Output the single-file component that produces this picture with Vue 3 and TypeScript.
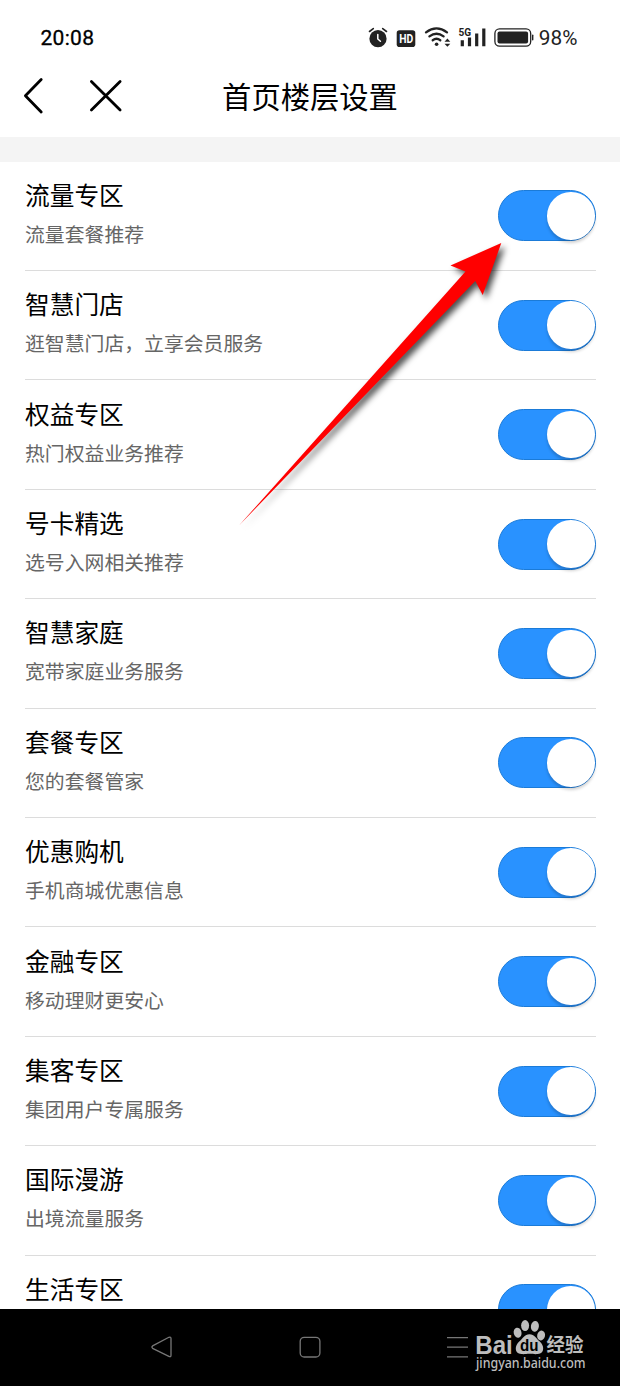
<script setup lang="ts">
import { ref } from 'vue'

interface Floor {
  title: string
  desc: string
  enabled: boolean
}

const floors = ref<Floor[]>([
  { title: '流量专区', desc: '流量套餐推荐', enabled: true },
  { title: '智慧门店', desc: '逛智慧门店，立享会员服务', enabled: true },
  { title: '权益专区', desc: '热门权益业务推荐', enabled: true },
  { title: '号卡精选', desc: '选号入网相关推荐', enabled: true },
  { title: '智慧家庭', desc: '宽带家庭业务服务', enabled: true },
  { title: '套餐专区', desc: '您的套餐管家', enabled: true },
  { title: '优惠购机', desc: '手机商城优惠信息', enabled: true },
  { title: '金融专区', desc: '移动理财更安心', enabled: true },
  { title: '集客专区', desc: '集团用户专属服务', enabled: true },
  { title: '国际漫游', desc: '出境流量服务', enabled: true },
  { title: '生活专区', desc: '', enabled: true },
])
</script>

<template>
  <div class="screen">
    <div class="status">
      <span class="time">20:08</span>
      <svg class="status-icons" width="230" height="40" viewBox="0 0 230 40">
        <!-- alarm -->
        <g fill="none" stroke="#222" stroke-width="1.6" stroke-linecap="round">
          <circle cx="18" cy="18.7" r="8.6" fill="#222" stroke="none" />
          <path d="M9.5 11.5 L13.3 8.6 M22.7 8.6 L26.5 11.5" />
          <path d="M17.8 14.6 V19 L20.4 21.3" stroke="#fff" stroke-width="1.5" />
        </g>
        <!-- HD -->
        <rect x="36.7" y="10.2" width="18.6" height="16.8" rx="2.8" fill="#222" />
        <text x="39.2" y="23.3" class="hd" textLength="14" lengthAdjust="spacingAndGlyphs">HD</text>
        <!-- wifi -->
        <g fill="none" stroke="#222" stroke-width="2.3" stroke-linecap="round">
          <path d="M66 12.3 Q76.5 4.5 87 12.3" />
          <path d="M69.4 16.4 Q76.5 11 83.6 16.4" />
          <path d="M72.7 20.2 Q76.5 17.4 80.3 20.2" />
        </g>
        <circle cx="76.6" cy="24.3" r="1.8" fill="#222" />
        <path d="M84.5 21.7 L87.4 18.5 L90.3 21.7 Z M84.5 23.7 L87.4 26.8 L90.3 23.7 Z" fill="#222" />
        <!-- signal -->
        <text x="98.6" y="15.9" class="g5" textLength="12.6" lengthAdjust="spacingAndGlyphs">5G</text>
        <path d="M100.7 20.2h3.2v6h-3.2z M107.9 17.5h3.2v8.7h-3.2z M115.1 13.4h3.2v12.8h-3.2z M122.2 8.6h3.2v17.6h-3.2z" fill="#222" />
        <!-- battery -->
        <rect x="134.9" y="8.8" width="35.8" height="17.4" rx="4.6" fill="none" stroke="#222" stroke-width="1.3" />
        <rect x="137.5" y="11.4" width="30.6" height="12.2" rx="2" fill="#222" />
        <rect x="172" y="14.5" width="1.4" height="6" rx=".7" fill="#222" />
        <text x="178.8" y="25.1" class="pct" textLength="38.6" lengthAdjust="spacingAndGlyphs">98%</text>
      </svg>
    </div>

    <header class="header">
      <svg class="nav-icons" width="140" height="50" viewBox="0 0 140 50">
        <g fill="none" stroke="#000" stroke-width="2.8" stroke-linecap="round" stroke-linejoin="round">
          <path d="M41.2 9.5 L25.4 25.7 L41.2 41.9" />
          <path d="M91.4 11.4 L120.1 40.1 M120.1 11.4 L91.4 40.1" />
        </g>
      </svg>
      <h1 class="heading">首页楼层设置</h1>
    </header>

    <main class="list">
      <section v-for="f in floors" :key="f.title" class="row">
        <div class="label">
          <div class="title">{{ f.title }}</div>
          <div class="desc">{{ f.desc }}</div>
        </div>
        <button
          type="button"
          role="switch"
          class="toggle"
          :class="{ on: f.enabled }"
          :aria-checked="f.enabled"
          :aria-label="f.title"
          @click="f.enabled = !f.enabled"
        >
          <span class="knob"></span>
        </button>
      </section>
    </main>

    <footer class="navbar">
      <svg width="620" height="77" viewBox="0 0 620 77">
        <g fill="none" stroke="#777" stroke-width="1.3" stroke-linejoin="round">
          <path d="M152.6 36.9 L168.9 28.3 Q171 27.5 171 29.6 V46.2 Q171 48.4 168.9 47.4 L152.6 39.3 Q151.2 38.1 152.6 36.9 Z" />
          <rect x="300.2" y="28.3" width="19.7" height="19.7" rx="4" />
          <path d="M447 28.6 H468 M447 38.2 H468 M447 47.9 H468" />
        </g>
        <!-- Baidu Jingyan mark -->
        <g fill="#bdbdbd">
          <text x="475.3" y="44.6" class="bai" textLength="37.5" lengthAdjust="spacingAndGlyphs">Bai</text>
          <ellipse cx="517.6" cy="23.7" rx="3.9" ry="5.1" transform="rotate(-12 517.6 23.7)" />
          <ellipse cx="525.1" cy="16.6" rx="4" ry="5.5" />
          <ellipse cx="534.9" cy="17.3" rx="4" ry="5.4" transform="rotate(8 534.9 17.3)" />
          <ellipse cx="541.1" cy="26.5" rx="3.9" ry="5" transform="rotate(14 541.1 26.5)" />
          <path d="M529.5 25.2 C534.5 25.2 536 29.5 539.5 32.3 C544.6 36.5 544.8 44.6 537.8 45.1 C534 45.5 532.5 44.7 529.5 44.8 C526.5 44.7 525 45.5 521.2 45.1 C514.2 44.6 514.4 36.5 519.5 32.3 C523 29.5 524.5 25.2 529.5 25.2 Z" />
          <text x="520" y="42" class="du" textLength="18.5" lengthAdjust="spacingAndGlyphs">du</text>
          <text x="546.5" y="43.2" class="jy" textLength="37" lengthAdjust="spacingAndGlyphs">经验</text>
          <text x="476" y="59.3" class="site" textLength="109.5" lengthAdjust="spacingAndGlyphs">jingyan.baidu.com</text>
        </g>
      </svg>
    </footer>

    <svg class="pointer" width="620" height="560" viewBox="0 0 620 560" aria-hidden="true">
      <defs>
        <linearGradient id="fade" gradientUnits="userSpaceOnUse" x1="240" y1="524" x2="370" y2="380">
          <stop offset="0" stop-color="#000" stop-opacity=".25" />
          <stop offset="1" stop-color="#000" stop-opacity=".7" />
        </linearGradient>
        <filter id="soft" x="-10%" y="-10%" width="120%" height="120%">
          <feGaussianBlur stdDeviation="3" />
        </filter>
      </defs>
      <path transform="translate(3.5 4)" filter="url(#soft)" fill="url(#fade)" d="M239 525.5 L465.5 271.5 L450.5 265.5 L501.3 243 L482.7 295 L475.3 281 Z" />
      <path fill="#f00" d="M239 525.5 L465.5 271.5 L450.5 265.5 L501.3 243 L482.7 295 L475.3 281 Z" />
    </svg>
  </div>
</template>

<style>
html,
body {
  margin: 0;
  background: #fff;
}
</style>

<style scoped>
.screen {
  position: relative;
  display: flex;
  flex-direction: column;
  width: 620px;
  height: 1386px;
  overflow: hidden;
  background: #fff;
  color: #000;
  font-family: Roboto, "Noto Sans CJK SC", sans-serif;
}
.status {
  flex: none;
  display: flex;
  align-items: flex-start;
  justify-content: space-between;
  box-sizing: border-box;
  height: 70px;
  padding: 20px 30px 0 40.5px;
}
.time {
  font-size: 21px;
  font-weight: 400;
  line-height: 36px;
  letter-spacing: 0.3px;
  -webkit-text-stroke: 0.3px #000;
}
.hd {
  font: 700 13px Roboto, sans-serif;
  fill: #fff;
}
.g5 {
  font: 700 11px Roboto, sans-serif;
  fill: #222;
}
.pct {
  font: 400 21px Roboto, sans-serif;
  fill: #222;
}
.header {
  flex: none;
  display: grid;
  height: 66.5px;
  border-bottom: 25px solid #f4f4f4;
}
.nav-icons,
.heading {
  grid-area: 1 / 1;
}
.heading {
  margin: 0;
  justify-self: center;
  font-size: 29.3px;
  font-weight: 400;
  line-height: 56px;
}
.list {
  flex: 1;
  min-height: 0;
  overflow: hidden;
  padding: 0 24px 0 25px;
}
.row {
  display: flex;
  justify-content: space-between;
  align-items: flex-start;
  box-sizing: border-box;
  height: 109.42px;
  border-bottom: 1px solid #dcdcdc;
}
.label {
  padding-top: 17.3px;
}
.title {
  font-size: 24.7px;
  line-height: 36px;
}
.desc {
  margin-top: 3px;
  color: #666;
  font-size: 19.85px;
  font-weight: 400;
  line-height: 36px;
}
.toggle {
  display: flex;
  align-items: center;
  box-sizing: border-box;
  width: 98px;
  height: 51px;
  margin: 28.8px 0 0;
  padding: 0;
  border: 1px solid #bbb;
  border-radius: 26px;
  background: #ddd;
}
.toggle.on {
  justify-content: flex-end;
  border-color: #1b7bd8;
  background: #2992ff;
}
.knob {
  width: 47.5px;
  height: 47.5px;
  margin: 0 0.5px;
  border-radius: 50%;
  background: #fff;
  box-shadow: 0 3px 3px rgba(0, 0, 0, 0.18);
}
.navbar {
  flex: none;
  height: 77px;
  background: #000;
}
.navbar svg {
  display: block;
}
.bai {
  font: 700 25px "Liberation Sans", sans-serif;
}
.du {
  font: 700 16px "Liberation Sans", sans-serif;
  fill: #000;
}
.jy {
  font: 700 19px "Noto Sans CJK SC", sans-serif;
}
.site {
  font: 500 13.5px "Noto Sans", sans-serif;
}
.pointer {
  position: absolute;
  top: 0;
  left: 0;
  pointer-events: none;
}
</style>
